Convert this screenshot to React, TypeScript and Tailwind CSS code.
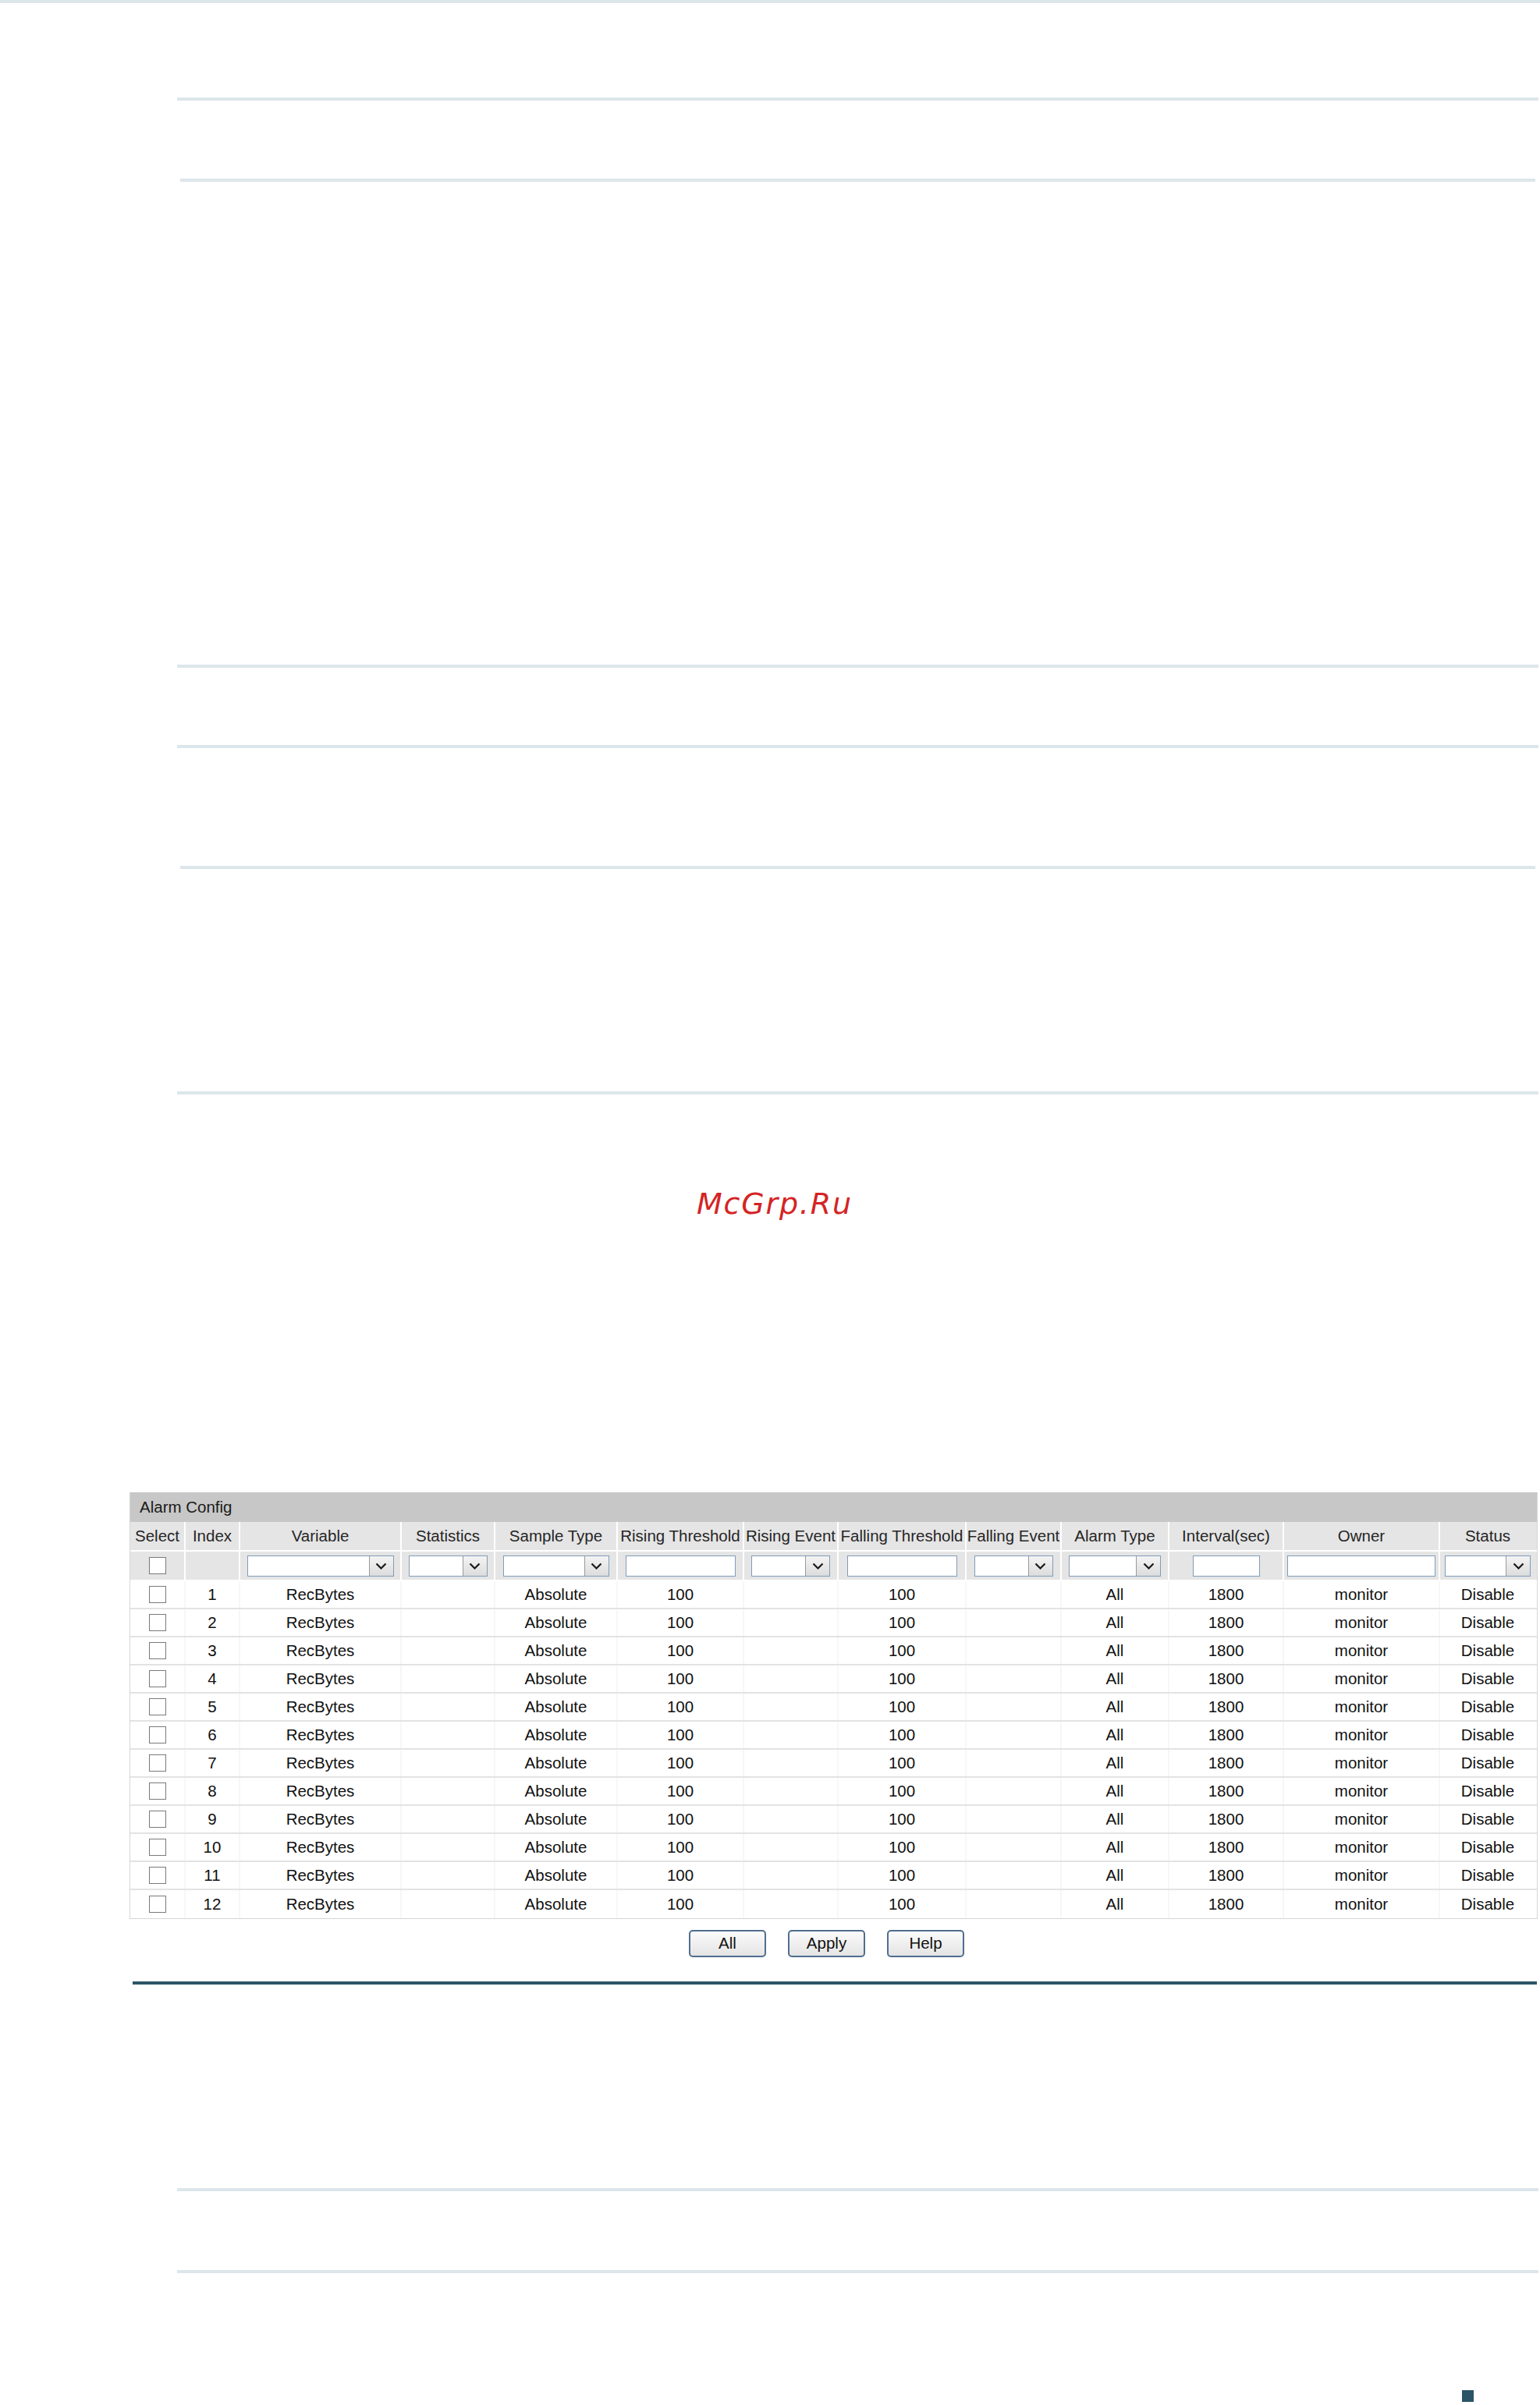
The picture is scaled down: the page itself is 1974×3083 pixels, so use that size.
import React from "react";

type Col = { w: string; h: string; f: "check" | "none" | "select" | "input"; fw: string };

const cols: Col[] = [
  { w: "w-[71px]", h: "Select", f: "check", fw: "" },
  { w: "w-[70px]", h: "Index", f: "none", fw: "" },
  { w: "w-[207px]", h: "Variable", f: "select", fw: "w-[188px]" },
  { w: "w-[120px]", h: "Statistics", f: "select", fw: "w-[101px]" },
  { w: "w-[157px]", h: "Sample Type", f: "select", fw: "w-[136px]" },
  { w: "w-[162px]", h: "Rising Threshold", f: "input", fw: "w-[141px]" },
  { w: "w-[121px]", h: "Rising Event", f: "select", fw: "w-[101px]" },
  { w: "w-[164px]", h: "Falling Threshold", f: "input", fw: "w-[141px]" },
  { w: "w-[122px]", h: "Falling Event", f: "select", fw: "w-[101px]" },
  { w: "w-[138px]", h: "Alarm Type", f: "select", fw: "w-[118px]" },
  { w: "w-[147px]", h: "Interval(sec)", f: "input", fw: "w-[86px]" },
  { w: "w-[200px]", h: "Owner", f: "input", fw: "w-[190px]" },
  { w: "w-[122px]", h: "Status", f: "select", fw: "w-[110px]" },
];

const rowValues = (n: number) => [
  "",
  String(n),
  "RecBytes",
  "",
  "Absolute",
  "100",
  "",
  "100",
  "",
  "All",
  "1800",
  "monitor",
  "Disable",
];

function Check() {
  return <div className="w-[22px] h-[22px] border-[1.5px] border-[#7a7a7a] bg-white" />;
}

function Chevron() {
  return (
    <svg width="15" height="9" viewBox="0 0 15 9">
      <polyline points="1.5,1.5 7.5,7.5 13.5,1.5" fill="none" stroke="#1a1a1a" strokeWidth="2.2" />
    </svg>
  );
}

function SelectBox({ w }: { w: string }) {
  return (
    <div className={`${w} h-[27px] border border-[#7f9db9] bg-white flex justify-end`}>
      <div className="w-[31px] h-full border-l border-[#9a9a9a] bg-gradient-to-b from-[#f4f4f4] to-[#dcdcdc] flex items-center justify-center">
        <Chevron />
      </div>
    </div>
  );
}

function InputBox({ w }: { w: string }) {
  return <div className={`${w} h-[27px] border border-[#7f9db9] bg-white`} />;
}

function Line({ inset, mt }: { inset?: boolean; mt: string }) {
  return (
    <div
      className={`${mt} h-[4px] bg-[#dce6eb] ${inset ? "ml-[231px] w-[1737px]" : "ml-[227px] w-[1745px]"}`}
    />
  );
}

export default function App() {
  return (
    <div className="w-[1974px] h-[3083px] bg-white flex flex-col" style={{ fontFamily: '"Liberation Sans", Arial, sans-serif' }}>
      <div className="h-[4px] w-full bg-[#dce6eb]" />
      <Line mt="mt-[121px]" />
      <Line mt="mt-[100px]" inset />
      <Line mt="mt-[619px]" />
      <Line mt="mt-[99px]" />
      <Line mt="mt-[151px]" inset />
      <Line mt="mt-[285px]" />

      <div
        className="mt-[121px] ml-[893px] h-[38px] leading-[38px] text-[38px] italic tracking-[1.8px] text-[#d42424]"
        style={{ fontFamily: '"DejaVu Sans", sans-serif' }}
      >
        McGrp.Ru
      </div>

      <div className="mt-[351px] ml-[166px] w-[1805px] border-x border-b border-[#d6d6d6] text-[20.5px] leading-none">
        <div className="h-[38px] bg-[#c7c7c7] flex items-center pl-[12px] text-[#1a1a1a]">Alarm Config</div>
        <div className="flex h-[38px] bg-[#e5e5e5] border-b-2 border-white">
          {cols.map((c, i) => (
            <div
              key={i}
              className={`${c.w} h-full flex items-center justify-center text-[#262626] whitespace-nowrap ${i < cols.length - 1 ? "border-r-2 border-white" : ""}`}
            >
              {c.h}
            </div>
          ))}
        </div>
        <div className="flex h-[38px] bg-[#e5e5e5] border-b-2 border-white">
          {cols.map((c, i) => (
            <div
              key={i}
              className={`${c.w} h-full flex items-center justify-center ${i < cols.length - 1 ? "border-r-2 border-white" : ""}`}
            >
              {c.f === "check" && <Check />}
              {c.f === "select" && <SelectBox w={c.fw} />}
              {c.f === "input" && <InputBox w={c.fw} />}
            </div>
          ))}
        </div>
        {Array.from({ length: 12 }, (_, r) => (
          <div key={r} className={`flex h-[36px] bg-white ${r < 11 ? "border-b-2 border-[#e3e3e3]" : ""}`}>
            {rowValues(r + 1).map((v, i) => (
              <div
                key={i}
                className={`${cols[i].w} h-full flex items-center justify-center text-[#111] ${i < cols.length - 1 ? "border-r-2 border-[#f7f7f7]" : ""}`}
              >
                {i === 0 ? <Check /> : v}
              </div>
            ))}
          </div>
        ))}
      </div>

      <div className="mt-[14px] ml-[883px] flex gap-[28px]">
        {["All", "Apply", "Help"].map((b) => (
          <div
            key={b}
            className="w-[99px] h-[35px] rounded-[5px] border-2 border-[#4f6e8f] bg-gradient-to-b from-[#fbfbfb] to-[#e4e4e4] flex items-center justify-center text-[20.5px] text-[#111]"
          >
            {b}
          </div>
        ))}
      </div>

      <div className="mt-[31px] ml-[170px] w-[1800px] h-[4px] bg-[#2e5566]" />

      <Line mt="mt-[261px]" />
      <Line mt="mt-[101px]" />

      <div className="mt-[150px] ml-[1874px] w-[15px] h-[15px] bg-[#2b5467]" />
    </div>
  );
}
